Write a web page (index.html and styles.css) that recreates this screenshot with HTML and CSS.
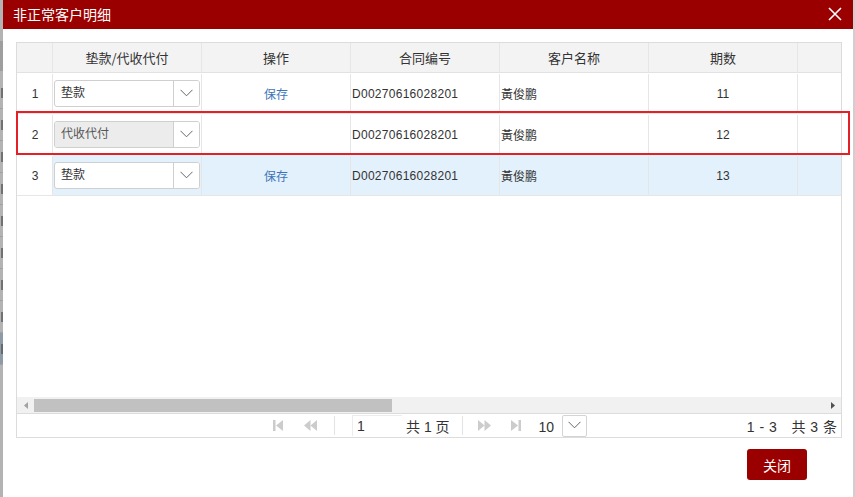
FILE: index.html
```html
<!DOCTYPE html>
<html lang="zh-CN">
<head>
<meta charset="utf-8">
<title>非正常客户明细</title>
<link rel="stylesheet" href="styles.css">
</head>
<body>
<div class="page">
  <div class="bg-left">
    <div class="bg-band"></div>
    <div class="frag"><i></i></div><div class="frag"><i></i></div><div class="frag"><i></i></div><div class="frag"><i></i></div><div class="frag"><i></i></div><div class="frag"><i></i></div><div class="frag"><i></i></div><div class="frag"><i></i></div><div class="frag blue"><i></i></div>
  </div>
  <div class="dialog">
    <div class="titlebar">
      <span class="title">非正常客户明细</span>
      <svg class="close-x" width="14" height="14" viewBox="0 0 14 14"><path d="M1 1 L13 13 M13 1 L1 13" stroke="#fff" stroke-width="1.6" fill="none"/></svg>
    </div>
    <div class="content">
      <div class="grid">
        <div class="grid-view">
          <div class="ghead">
            <div class="c c-num"></div>
            <div class="c c-w">垫款/代收代付</div>
            <div class="c c-w">操作</div>
            <div class="c c-w">合同编号</div>
            <div class="c c-w">客户名称</div>
            <div class="c c-w">期数</div>
            <div class="c c-w"></div>
          </div>
          <div class="grow">
            <div class="c c-num">1</div>
            <div class="c c-w c-sel">
              <div class="sel"><span class="sel-text">垫款</span><span class="sel-btn"><svg width="13" height="8" viewBox="0 0 13 8"><path d="M0.5 0.8 L6.5 6.8 L12.5 0.8" stroke="#666" stroke-width="1" fill="none"/></svg></span></div>
            </div>
            <div class="c c-w c-center"><a class="link">保存</a></div>
            <div class="c c-w c-left code">D00270616028201</div>
            <div class="c c-w c-left">黃俊鹏</div>
            <div class="c c-w c-center">11</div>
            <div class="c c-w"></div>
          </div>
          <div class="grow">
            <div class="c c-num">2</div>
            <div class="c c-w c-sel">
              <div class="sel disabled"><span class="sel-text">代收代付</span><span class="sel-btn"><svg width="13" height="8" viewBox="0 0 13 8"><path d="M0.5 0.8 L6.5 6.8 L12.5 0.8" stroke="#666" stroke-width="1" fill="none"/></svg></span></div>
            </div>
            <div class="c c-w c-center"></div>
            <div class="c c-w c-left code">D00270616028201</div>
            <div class="c c-w c-left">黃俊鹏</div>
            <div class="c c-w c-center">12</div>
            <div class="c c-w"></div>
          </div>
          <div class="grow selected">
            <div class="c c-num">3</div>
            <div class="c c-w c-sel">
              <div class="sel"><span class="sel-text">垫款</span><span class="sel-btn"><svg width="13" height="8" viewBox="0 0 13 8"><path d="M0.5 0.8 L6.5 6.8 L12.5 0.8" stroke="#666" stroke-width="1" fill="none"/></svg></span></div>
            </div>
            <div class="c c-w c-center"><a class="link">保存</a></div>
            <div class="c c-w c-left code">D00270616028201</div>
            <div class="c c-w c-left">黃俊鹏</div>
            <div class="c c-w c-center">13</div>
            <div class="c c-w"></div>
          </div>
        </div>
        <div class="hscroll">
          <div class="sb-btn"><svg width="4" height="7" viewBox="0 0 4 7"><path d="M4 0 L0 3.5 L4 7 Z" fill="#a3a3a3"/></svg></div>
          <div class="sb-thumb"></div>
          <div class="sb-track"></div>
          <div class="sb-btn"><svg width="4" height="7" viewBox="0 0 4 7"><path d="M0 0 L4 3.5 L0 7 Z" fill="#505050"/></svg></div>
        </div>
        <div class="pager">
          <svg class="pg pg-first" width="10" height="11" viewBox="0 0 10 11"><rect x="0" y="0" width="2.5" height="11" fill="#ccc"/><path d="M10 0 L3 5.5 L10 11 Z" fill="#ccc"/></svg>
          <svg class="pg pg-prev" width="13" height="11" viewBox="0 0 13 11"><path d="M6.5 0 L0 5.5 L6.5 11 Z M13 0 L6.5 5.5 L13 11 Z" fill="#ccc"/></svg>
          <span class="pg-sep sep1"></span>
          <span class="pg-input">1</span>
          <span class="pg-total">共 1 页</span>
          <span class="pg-sep sep2"></span>
          <svg class="pg pg-next" width="13" height="11" viewBox="0 0 13 11"><path d="M0 0 L6.5 5.5 L0 11 Z M6.5 0 L13 5.5 L6.5 11 Z" fill="#ccc"/></svg>
          <svg class="pg pg-last" width="10" height="11" viewBox="0 0 10 11"><path d="M0 0 L7 5.5 L0 11 Z" fill="#ccc"/><rect x="7.5" y="0" width="2.5" height="11" fill="#ccc"/></svg>
          <span class="pg-size"><span class="pg-size-val">10</span><span class="pg-size-btn"><svg width="13" height="8" viewBox="0 0 13 8"><path d="M0.5 0.8 L6.5 6.8 L12.5 0.8" stroke="#666" stroke-width="1" fill="none"/></svg></span></span>
          <span class="pg-info">1 - 3 &nbsp; 共 3 条</span>
        </div>
      </div>
      <div class="actions">
        <button class="btn-close">关闭</button>
      </div>
    </div>
    <div class="highlight"></div>
  </div>
  <div class="bg-right"></div>
</div>
</body>
</html>
```

FILE: styles.css
```css
* { box-sizing: border-box; }
html, body { margin: 0; padding: 0; }
body {
  width: 855px;
  height: 497px;
  overflow: hidden;
  background: #fff;
  color: #333;
  font-family: "Liberation Sans", "Noto Sans CJK SC", sans-serif;
  font-size: 12px;
}
.page { display: flex; height: 497px; }

.bg-left {
  width: 3px;
  flex: none;
  background: #b3b3b3;
  overflow: hidden;
  padding-top: 12px;
}
.bg-band { height: 30px; margin-top: 29px; background: #9e9e9e; margin-bottom: 6px; }
.frag {
  height: 32px;
  padding-top: 11px;
  border-bottom: 1px solid #a2a2a2;
}
.frag i {
  display: block;
  width: 2px;
  height: 10px;
  margin-left: 1px;
  background: #555;
  opacity: 0.7;
}
.frag.blue { background: #8e9aa6; }
.bg-right { width: 2px; flex: none; background: #cfcfcf; }

.dialog {
  width: 850px;
  flex: none;
  position: relative;
  background: #fff;
  display: flex;
  flex-direction: column;
}
.titlebar {
  height: 29px;
  background: #9b0000;
  color: #fff;
  display: flex;
  align-items: center;
  justify-content: space-between;
  padding: 0 11px 0 10px;
  font-size: 14px;
}
.title { font-family: "Noto Sans CJK SC", sans-serif; line-height: 29px; }
.close-x { display: block; margin-top: -1px; }

.content { padding: 13px 11px 0 13px; }
.grid { width: 826px; border: 1px solid #dcdcdc; }
.grid-view { height: 354px; overflow: hidden; }

.ghead, .grow { display: flex; width: 930px; }
.ghead {
  height: 30px;
  background: #f3f3f3;
  border-bottom: 1px solid #e2e2e2;
  font-size: 13px;
}
.ghead .c { justify-content: center; font-family: "Noto Sans CJK SC", sans-serif; color: #333; }
.grow { height: 41px; border-bottom: 1px solid #e6e6e6; padding-top: 1px; }
.c {
  flex: none;
  display: flex;
  align-items: center;
  border-right: 1px solid #e6e6e6;
  height: 100%;
  white-space: nowrap;
}
.c-num { width: 36px; justify-content: center; padding-left: 1px; }
.c-w { width: 149px; }
.c-center { justify-content: center; }
.c-left { padding-left: 1px; }
.code { letter-spacing: 0.28px; }
.grow.selected { background: linear-gradient(to right, #fff 36px, #e3f1fc 36px); }

.c-sel { padding-left: 1px; padding-bottom: 1px; }
.sel {
  width: 146px;
  height: 27px;
  border: 1px solid #cfcfcf;
  border-radius: 3px;
  background: #fff;
  display: flex;
  overflow: hidden;
}
.sel-text { flex: 1; padding-left: 6px; line-height: 25px; font-size: 12px; color: #333; }
.sel-btn {
  width: 26px;
  flex: none;
  border-left: 1px solid #cfcfcf;
  background: #fff;
  display: flex;
  align-items: center;
  justify-content: center;
}
.sel.disabled .sel-text { background: #ececec; color: #555; }

.link { color: #3d74b8; font-size: 12px; }

.hscroll {
  height: 17px;
  display: flex;
  background: #f1f1f1;
  border-bottom: 1px solid #dcdcdc;
}
.sb-btn { width: 17px; flex: none; display: flex; align-items: center; justify-content: center; }
.sb-thumb { width: 358px; height: 13px; margin-top: 2px; background: #c1c1c1; flex: none; }
.sb-track { flex: 1; }

.pager {
  height: 23px;
  display: flex;
  align-items: center;
  font-size: 14px;
  color: #333;
}
.pg { display: block; flex: none; }
.pg-first { margin-left: 256px; }
.pg-prev { margin-left: 21px; }
.pg-sep { width: 1px; height: 19px; background: #e3e3e3; flex: none; }
.sep1 { margin-left: 17px; }
.pg-input {
  margin-left: 17px;
  width: 50px;
  height: 21px;
  border-top: 1px solid #ececec;
  border-left: 1px solid #ececec;
  padding-left: 4px;
  line-height: 20px;
  flex: none;
}
.pg-total { margin-left: 4px; white-space: nowrap; }
.sep2 { margin-left: 12px; }
.pg-next { margin-left: 15px; }
.pg-last { margin-left: 20px; }
.pg-size {
  margin-left: 16px;
  width: 50px;
  height: 22px;
  display: flex;
  flex: none;
}
.pg-size-val { flex: 1; padding-left: 2px; line-height: 24px; }
.pg-size-btn {
  width: 25px;
  border: 1px solid #d4d4d4;
  border-radius: 2px;
  display: flex;
  justify-content: center;
  padding-top: 5px;
}
.pg-info { margin-left: auto; padding-right: 4px; white-space: nowrap; word-spacing: 1px; }

.actions { display: flex; justify-content: flex-end; padding-right: 35px; margin-top: 11px; }
.btn-close {
  width: 60px;
  height: 31px;
  border: 0;
  border-radius: 3px;
  background: #9b0000;
  color: #fff;
  font-family: "Noto Sans CJK SC", sans-serif;
  font-size: 14px;
  padding: 0;
}

.highlight {
  position: absolute;
  left: 13px;
  top: 111px;
  width: 834px;
  height: 44px;
  border: 2px solid #e41f26;
  pointer-events: none;
}
```
